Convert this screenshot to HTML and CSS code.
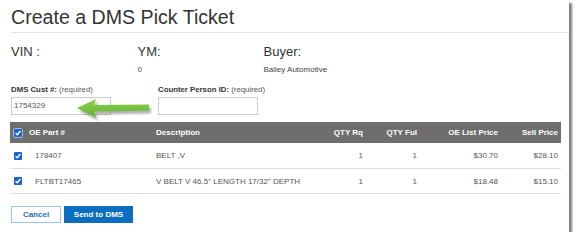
FILE: index.html
```html
<!DOCTYPE html>
<html>
<head>
<meta charset="utf-8">
<link rel="stylesheet" href="styles.css">
</head>
<body>
<div class="panel">
  <h1 class="title">Create a DMS Pick Ticket</h1>
  <div class="rule"></div>
  <div class="info">
    <div class="info-col"><div class="info-label">VIN :</div><div class="info-value">&nbsp;</div></div>
    <div class="info-col"><div class="info-label">YM:</div><div class="info-value">0</div></div>
    <div class="info-col"><div class="info-label">Buyer:</div><div class="info-value">Bailey Automotive</div></div>
  </div>
  <div class="fields">
    <div class="field">
      <div class="field-label"><b>DMS Cust #:</b> (required)</div>
      <div class="input">1754329</div>
    </div>
    <div class="field">
      <div class="field-label"><b>Counter Person ID:</b> (required)</div>
      <div class="input"></div>
    </div>
  </div>
  <div class="table">
    <div class="row head">
      <div class="cell cb"><span class="check light"><svg viewBox="0 0 8 8"><path d="M1.6 4.2 L3.3 5.8 L6.4 2" fill="none" stroke="#fff" stroke-width="1.4"/></svg></span></div>
      <div class="cell">OE Part #</div>
      <div class="cell">Description</div>
      <div class="cell num">QTY Rq</div>
      <div class="cell num">QTY Ful</div>
      <div class="cell num">OE List Price</div>
      <div class="cell num">Sell Price</div>
    </div>
    <div class="row data r1">
      <div class="cell cb"><span class="check"><svg viewBox="0 0 8 8"><path d="M1.6 4.2 L3.3 5.8 L6.4 2" fill="none" stroke="#fff" stroke-width="1.4"/></svg></span></div>
      <div class="cell part">178407</div>
      <div class="cell">BELT ,V</div>
      <div class="cell num">1</div>
      <div class="cell num">1</div>
      <div class="cell num">$30.70</div>
      <div class="cell num">$28.10</div>
    </div>
    <div class="row data">
      <div class="cell cb"><span class="check"><svg viewBox="0 0 8 8"><path d="M1.6 4.2 L3.3 5.8 L6.4 2" fill="none" stroke="#fff" stroke-width="1.4"/></svg></span></div>
      <div class="cell part">FLTBT17465</div>
      <div class="cell">V BELT V 46.5&quot; LENGTH 17/32&quot; DEPTH</div>
      <div class="cell num">1</div>
      <div class="cell num">1</div>
      <div class="cell num">$18.48</div>
      <div class="cell num">$15.10</div>
    </div>
  </div>
  <div class="actions">
    <button class="btn cancel">Cancel</button>
    <button class="btn send">Send to DMS</button>
  </div>
  <svg class="arrow" viewBox="0 0 82 28" width="82" height="28">
    <defs>
      <filter id="blur" x="-20%" y="-50%" width="140%" height="200%"><feGaussianBlur stdDeviation="1.2"/></filter>
      <linearGradient id="g" x1="0" y1="0" x2="0" y2="1">
        <stop offset="0" stop-color="#8fd14f"/>
        <stop offset="1" stop-color="#5fb52e"/>
      </linearGradient>
    </defs>
    <polygon points="3,12 22,3 20,9 75,8.5 75,14.5 20,15.5 22,21.5" fill="#555" opacity="0.45" filter="url(#blur)" transform="translate(2,3)"/>
    <polygon points="3,12 22,3 20,9 75,8.5 75,14.5 20,15.5 22,21.5" fill="url(#g)"/>
  </svg>
</div>
</body>
</html>
```

FILE: styles.css
```css
html, body {
  margin: 0;
  padding: 0;
  background: #fff;
}
body {
  font-family: "Liberation Sans", Arial, sans-serif;
  color: #333;
}
.panel {
  position: relative;
  width: 559px;
  height: 232px;
  padding-left: 10px;
  background: #fff;
  box-shadow: 3px 3px 2px rgba(0, 0, 0, 0.5);
  box-sizing: content-box;
}
.title {
  margin: 0 0 0 1px;
  padding-top: 7px;
  font-size: 19.6px;
  line-height: 20px;
  font-weight: normal;
  color: #333;
}
.rule {
  margin: 5px 0 0 1px;
  height: 1px;
  background: #e3e3e3;
}
.info {
  display: flex;
  margin: 11px 0 0 1px;
}
.info-col {
  width: 126px;
}
.info-col:first-child {
  width: 126.5px;
}
.info-label {
  font-size: 13px;
  line-height: 15px;
  color: #333;
}
.info-value {
  margin-top: 6px;
  font-size: 8px;
  line-height: 10px;
  color: #444;
}
.fields {
  display: flex;
  margin: 10px 0 0 1px;
}
.field {
  width: 147px;
}
.field-label {
  font-size: 7.8px;
  line-height: 10px;
  color: #555;
}
.field-label b {
  color: #333;
}
.input {
  margin-top: 2px;
  width: 96px;
  height: 16px;
  border: 1px solid #ccc;
  font-size: 8px;
  line-height: 16px;
  padding-left: 2px;
  color: #555;
}
.table {
  margin-top: 7px;
  width: 551px;
}
.row {
  display: grid;
  grid-template-columns: 19px 127px 164px 43px 54px 81px 60px;
  align-items: center;
  font-size: 8px;
}
.head {
  height: 21px;
  background: #6e6e6e;
  color: #fff;
  font-weight: bold;
}
.data {
  height: 24px;
  border-bottom: 1px solid #e0e0e0;
  color: #555;
}
.r1 {
  height: 25px;
}
.cell.cb {
  padding-left: 4px;
  display: flex;
  align-items: center;
}
.cell.part {
  padding-left: 6px;
}
.cell.num {
  text-align: right;
}
.check {
  display: block;
  width: 8px;
  height: 8px;
  background: #1a62d6;
  border-radius: 1px;
}
.check.light {
  box-shadow: 0 0 0 0.5px #fff;
}
.check svg {
  display: block;
  width: 8px;
  height: 8px;
}
.actions {
  display: flex;
  gap: 3px;
  margin: 12px 0 0 1px;
}
.btn {
  font-family: "Liberation Sans", Arial, sans-serif;
  font-size: 8px;
  font-weight: bold;
  height: 17px;
  padding: 0;
  margin: 0;
  cursor: pointer;
}
.cancel {
  width: 50px;
  background: #fff;
  border: 1px solid #9cc3e6;
  color: #2a6db3;
}
.send {
  width: 69px;
  background: #0b6ec0;
  border: 1px solid #0b6ec0;
  color: #fff;
}
.arrow {
  position: absolute;
  left: 74px;
  top: 96px;
}
```
